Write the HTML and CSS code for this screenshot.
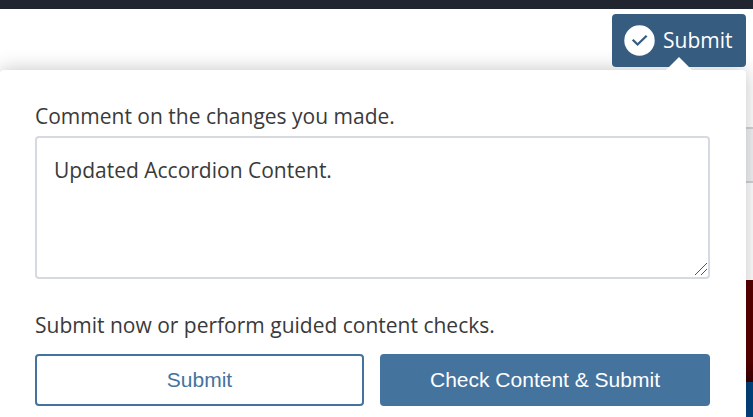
FILE: index.html
```
<!DOCTYPE html>
<html lang="en">
<head>
    <meta charset="UTF-8">
    <meta name="viewport" content="width=device-width, initial-scale=1.0">
    <title>Submit Changes</title>
    <link rel="stylesheet" href="styles.css">
</head>
<body>

<div class="topbar"></div>

<div class="toolbar">
    <div class="submit-menu">
        <button type="button" class="submit-toggle">
            <svg class="check-icon" viewBox="0 0 32 32">
                <circle cx="16" cy="16" r="15.7" fill="#fff"/>
                <path d="M9 15.2l5 4.9 9.4-9" fill="none" stroke="#365c7f" stroke-width="2.4"/>
            </svg>
            <span>Submit</span>
        </button>
    </div>
</div>

<!-- Page preview behind the panel -->
<div class="preview">
    <div class="preview-nav"></div>
    <div class="preview-banner"></div>
    <div class="preview-footer"></div>
</div>

<form class="panel">
    <label for="comment">Comment on the changes you made.</label>
    <div class="comment-box">
        <textarea id="comment" name="comment">Updated Accordion Content.</textarea>
        <svg class="grip" viewBox="0 0 14 14">
            <path d="M1 13L13 1M7 13l6-6" fill="none" stroke="#555" stroke-width="1"/>
        </svg>
    </div>
    <p>Submit now or perform guided content checks.</p>
    <div class="actions">
        <button type="button" class="btn">Submit</button>
        <button type="button" class="btn btn-primary">Check Content &amp; Submit</button>
    </div>
</form>

</body>
</html>
```
FILE: styles.css
```
* {
    box-sizing: border-box;
}

body {
    position: relative;
    height: 417px;
    margin: 0;
    overflow: hidden;
    font-family: "Open Sans", sans-serif;
    color: #3a3a3a;
    background-color: #fff;
}

.topbar {
    height: 9px;
    background-color: #21252f;
}

.toolbar {
    display: flex;
    justify-content: flex-end;
    padding: 5px 7px 0;
}

.submit-menu {
    position: relative;
    z-index: 2;
}

/* arrow pointing from the panel to the button */
.submit-menu::after {
    content: "";
    position: absolute;
    left: 54px;
    bottom: -3px;
    border: 13px solid transparent;
    border-top: 0;
    border-bottom-color: #fff;
}

.submit-toggle {
    display: flex;
    align-items: center;
    gap: 8px;
    width: 134px;
    height: 53px;
    padding: 0 0 1px 12px;
    border: none;
    border-radius: 4px;
    font-family: inherit;
    font-size: 21px;
    color: #fff;
    background-color: #365c7f;
}

.check-icon {
    width: 31px;
    height: 31px;
}

.preview-nav {
    height: 56px;
    margin-top: 60px;
    border: solid #d0d3d8;
    border-width: 2px 0;
    background-color: #f0f2f4;
}

.preview-banner {
    height: 102px;
    margin-top: 97px;
    background: linear-gradient(#580000 80%, #380000);
}

.preview-footer {
    height: 35px;
    background-color: #00437e;
}

.panel {
    position: absolute;
    top: 70px;
    left: 0;
    width: 746px;
    height: 347px;
    padding: 31px 36px 0 35px;
    border-radius: 4px 4px 0 0;
    background-color: #fff;
    box-shadow: 0 0 20px rgba(0, 0, 0, 0.24);
}

label, p {
    display: block;
    margin: 0;
    font-size: 21px;
    line-height: 30px;
}

.comment-box {
    position: relative;
    height: 143px;
    margin: 5px 0 31px;
}

textarea {
    display: block;
    width: 100%;
    height: 100%;
    padding: 17px;
    border: 2px solid #d5d9e0;
    border-radius: 4px;
    font-family: inherit;
    font-size: 21px;
    line-height: 30px;
    color: #3a3a3a;
    resize: none;
}

.grip {
    position: absolute;
    right: 2px;
    bottom: 3px;
    width: 14px;
    height: 14px;
}

.actions {
    display: flex;
    gap: 16px;
    margin-top: 14px;
}

.btn {
    width: 329px;
    height: 52px;
    padding: 0;
    border: 2px solid #44739e;
    border-radius: 4px;
    font-family: "Liberation Sans", Arial, sans-serif;
    font-size: 21px;
    color: #44739e;
    background-color: #fff;
}

.btn-primary {
    width: 330px;
    color: #fff;
    background-color: #44739e;
}
```
